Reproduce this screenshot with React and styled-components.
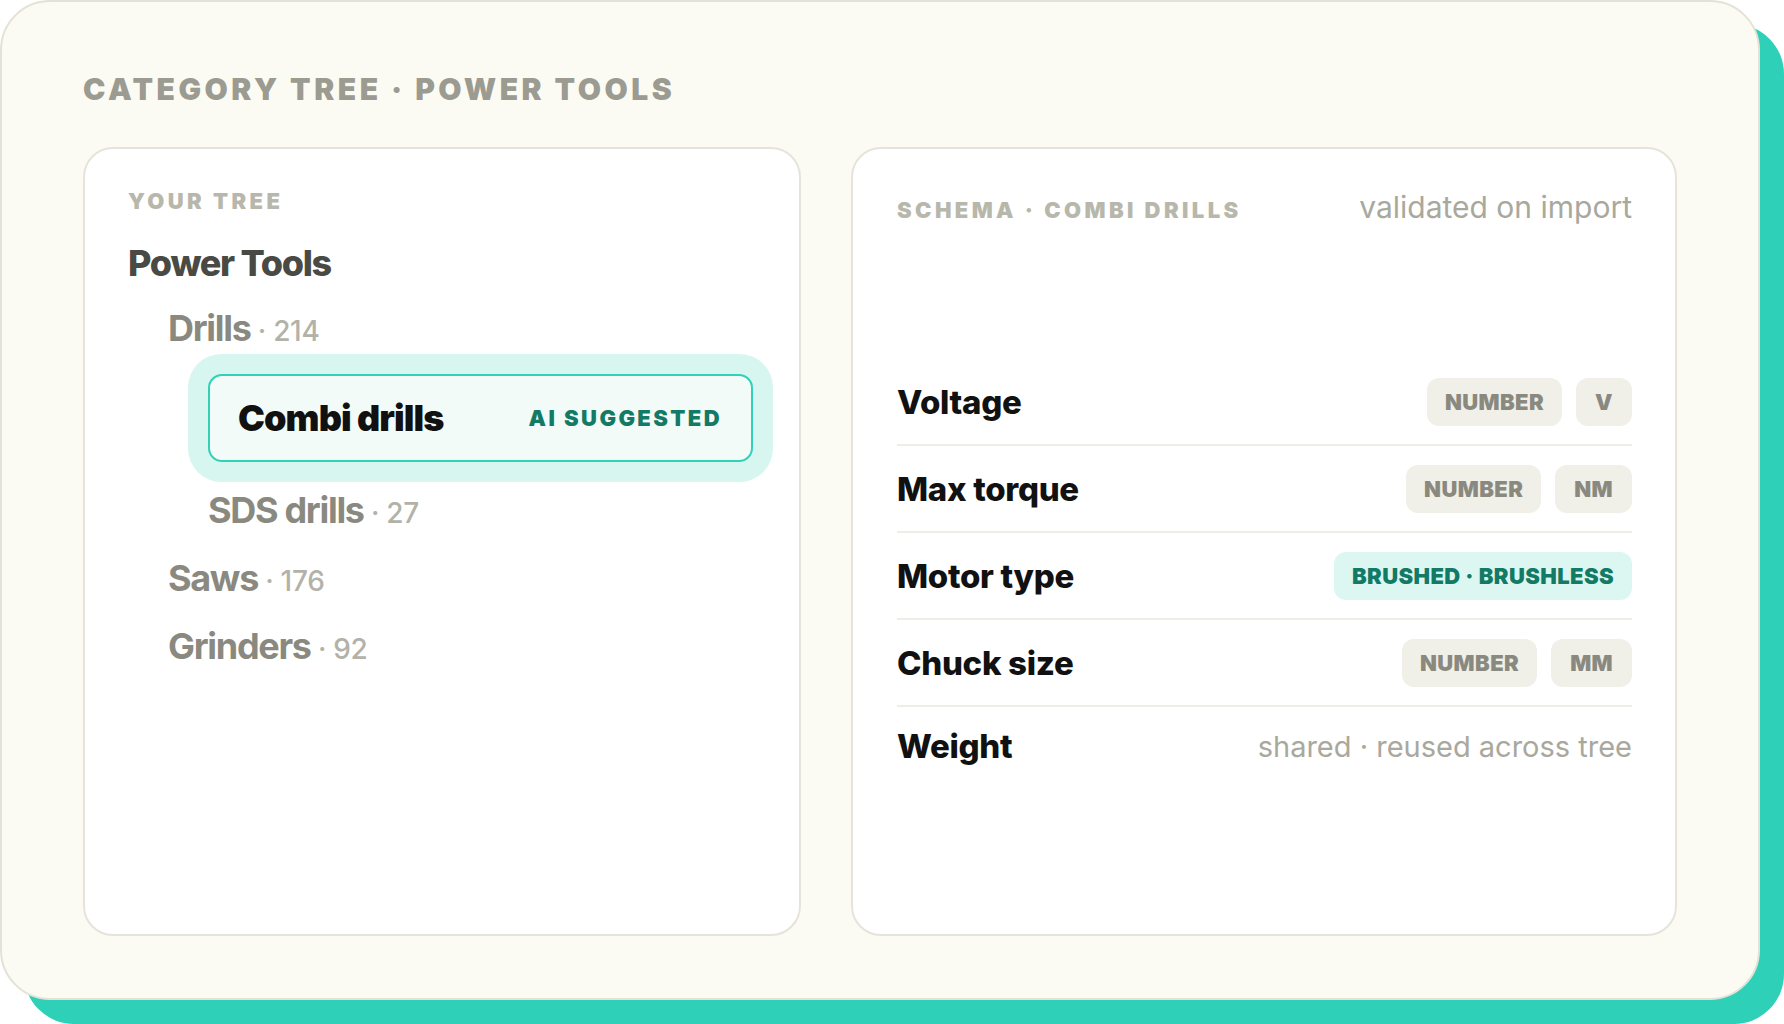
import React from "react";
import styled, { createGlobalStyle } from "styled-components";

const Global = createGlobalStyle`
  html, body { margin: 0; padding: 0; background: #ffffff; }
  body { font-family: "Inter", "Liberation Sans", sans-serif; }
  * { box-sizing: border-box; }
`;

const Page = styled.div`
  min-height: 1024px;
  padding: 0 24px 24px 0;
`;

const Card = styled.div`
  width: 1760px;
  height: 1000px;
  background: #fbfbf3;
  border: 2px solid #e4e2d6;
  border-radius: 50px;
  box-shadow: 24px 24px 0 #2ed1b7;
  padding: 69px 81px 62px;
  display: flex;
  flex-direction: column;
`;

const Title = styled.h1`
  margin: 0 0 40px;
  font-size: 30px;
  line-height: 36px;
  font-weight: 900;
  letter-spacing: 3.5px;
  color: #9c9b91;
  text-transform: uppercase;
`;

const Columns = styled.div`
  flex: 1;
  display: grid;
  grid-template-columns: 718px 826px;
  gap: 50px;
`;

const Panel = styled.section`
  background: #ffffff;
  border: 2px solid #e6e4da;
  border-radius: 30px;
  padding: ${(p) => (p.$right ? "40px 43px 40px 44px" : "41px 43px 40px 43px")};
  display: flex;
  flex-direction: column;
`;

const Eyebrow = styled.div`
  font-size: 22px;
  line-height: 22px;
  font-weight: 900;
  letter-spacing: 3.4px;
  color: #b8b7ab;
  text-transform: uppercase;
`;

const Tree = styled.ul`
  list-style: none;
  margin: 29px 0 0;
  padding: 0;
  display: flex;
  flex-direction: column;
  gap: 21px;
`;

const Node = styled.li`
  padding-left: ${(p) => p.$indent}px;
  font-size: 36px;
  line-height: 44px;
  font-weight: ${(p) => (p.$root ? 800 : 700)};
  color: ${(p) => (p.$root ? "#4a4a45" : "#8a8980")};
  letter-spacing: -1.3px;
`;

const Count = styled.span`
  font-size: 28px;
  font-weight: 500;
  color: #b3b2a8;
  letter-spacing: -0.3px;
`;

const Suggested = styled.li`
  margin: 0 3px 5px 80px;
  height: 88px;
  border: 2px solid #2fd1b8;
  border-radius: 14px;
  background: #f3fbf8;
  box-shadow: 0 0 0 20px #d8f6f0;
  display: flex;
  align-items: center;
  justify-content: space-between;
  padding: 0 29px 0 28px;
`;

const SuggestedName = styled.span`
  font-size: 36px;
  font-weight: 900;
  color: #111111;
  letter-spacing: -0.9px;
`;

const AiTag = styled.span`
  font-size: 22px;
  font-weight: 900;
  letter-spacing: 2.4px;
  color: #137a66;
`;

const SchemaHead = styled.div`
  display: flex;
  align-items: baseline;
  justify-content: space-between;
  line-height: 36px;
`;

const Note = styled.span`
  font-size: ${(p) => (p.$head ? 30 : 29)}px;
  font-weight: 400;
  color: #a9a89d;
  letter-spacing: 0;
`;

const Fields = styled.div`
  margin-top: 134px;
  display: flex;
  flex-direction: column;
`;

const Field = styled.div`
  height: ${(p) => (p.$last ? "78px" : "87px")};
  display: flex;
  align-items: center;
  justify-content: space-between;
  border-bottom: ${(p) => (p.$last ? "none" : "2px solid #efeee6")};
`;

const Label = styled.span`
  font-size: 33px;
  font-weight: 800;
  color: #111111;
  letter-spacing: -0.3px;
`;

const Pills = styled.div`
  display: flex;
  gap: 14px;
`;

const Pill = styled.span`
  height: 48px;
  padding: 0 ${(p) => (p.$short ? 19 : 18)}px;
  border-radius: 12px;
  display: inline-flex;
  align-items: center;
  font-size: 22px;
  font-weight: 900;
  letter-spacing: 0.4px;
  background: ${(p) => (p.$teal ? "#dcf7f1" : "#f0efe8")};
  color: ${(p) => (p.$teal ? "#137a66" : "#8a897f")};
`;

const fields = [
  { label: "Voltage", pills: ["NUMBER", "V"] },
  { label: "Max torque", pills: ["NUMBER", "NM"] },
  { label: "Motor type", teal: "BRUSHED · BRUSHLESS" },
  { label: "Chuck size", pills: ["NUMBER", "MM"] },
  { label: "Weight", note: "shared · reused across tree" },
];

export default function App() {
  return (
    <>
      <Global />
      <Page>
        <Card>
          <Title>Category tree · Power tools</Title>
          <Columns>
            <Panel>
              <Eyebrow>Your tree</Eyebrow>
              <Tree>
                <Node $root $indent={0}>Power Tools</Node>
                <Node $indent={40}>
                  Drills <Count>· 214</Count>
                </Node>
                <Suggested>
                  <SuggestedName>Combi drills</SuggestedName>
                  <AiTag>AI SUGGESTED</AiTag>
                </Suggested>
                <Node $indent={80}>
                  SDS drills <Count>· 27</Count>
                </Node>
                <Node $indent={40}>
                  Saws <Count>· 176</Count>
                </Node>
                <Node $indent={40}>
                  Grinders <Count>· 92</Count>
                </Node>
              </Tree>
            </Panel>
            <Panel $right>
              <SchemaHead>
                <Eyebrow>Schema · Combi drills</Eyebrow>
                <Note $head>validated on import</Note>
              </SchemaHead>
              <Fields>
                {fields.map((f, i) => (
                  <Field key={f.label} $last={i === fields.length - 1}>
                    <Label>{f.label}</Label>
                    {f.pills && (
                      <Pills>
                        {f.pills.map((p, j) => (
                          <Pill key={p} $short={j === 1}>{p}</Pill>
                        ))}
                      </Pills>
                    )}
                    {f.teal && (
                      <Pills>
                        <Pill $teal>{f.teal}</Pill>
                      </Pills>
                    )}
                    {f.note && <Note>{f.note}</Note>}
                  </Field>
                ))}
              </Fields>
            </Panel>
          </Columns>
        </Card>
      </Page>
    </>
  );
}
